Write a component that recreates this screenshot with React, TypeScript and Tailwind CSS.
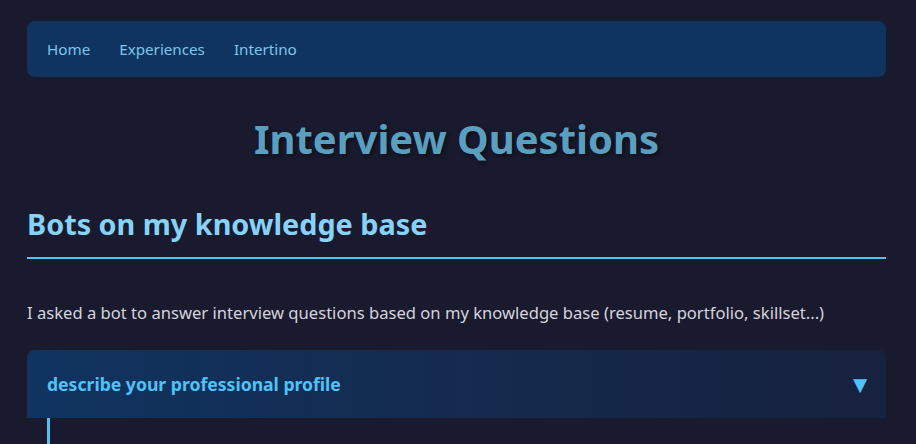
import { useState } from "react";

const questions = [
  {
    q: "describe your professional profile",
    a: "",
  },
];

export default function App() {
  const [open, setOpen] = useState<number | null>(0);

  return (
    <div className="min-h-screen bg-[#1a1a2e] pl-[27px] pr-[30px] pt-[21px] font-['Noto_Sans',sans-serif] text-[#d4d4dc]">
      <nav className="flex h-[56px] items-center gap-[29px] rounded-lg bg-[#0f3460] px-5 text-[15.2px] text-[#7cc6ea]">
        <a href="#">Home</a>
        <a href="#">Experiences</a>
        <a href="#">Intertino</a>
      </nav>

      <h1 className="mt-[38px] text-center text-[40px] font-bold leading-[48px] text-[#5b9fc0] [text-shadow:2px_2px_4px_rgba(0,0,0,0.5)]">
        Interview Questions
      </h1>

      <h2 className="mt-[42px] border-b-2 border-[#4fc3f7] pb-[14px] text-[28.8px] font-bold leading-[38px] text-[#87d3f8]">
        Bots on my knowledge base
      </h2>

      <p className="mt-[41px] text-[16.6px] leading-[26px]">
        I asked a bot to answer interview questions based on my knowledge base (resume, portfolio, skillset...)
      </p>

      <div className="mt-[24px] flex flex-col gap-4">
        {questions.map((item, i) => (
          <div key={i} className="overflow-hidden rounded-lg">
            <button
              onClick={() => setOpen(open === i ? null : i)}
              className="flex h-[68px] w-full items-center justify-between bg-gradient-to-r from-[#0f3460] to-[#16213e] pl-5 pr-[14px] text-left"
            >
              <span className="text-[17.6px] font-bold text-[#4fc3f7]">{item.q}</span>
              <span className="text-[24px] leading-none text-[#4fc3f7]">▼</span>
            </button>
            {open === i && (
              <div className="ml-5 h-[30px] border-l-[3px] border-[#4fc3f7] px-4 py-3 text-[15px]">{item.a}</div>
            )}
          </div>
        ))}
      </div>
    </div>
  );
}
